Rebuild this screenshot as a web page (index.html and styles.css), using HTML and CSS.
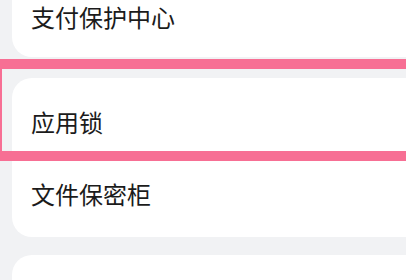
FILE: index.html
```html
<!DOCTYPE html>
<html lang="zh-CN">
<head>
    <meta charset="UTF-8">
    <meta name="viewport" content="width=device-width, initial-scale=1.0">
    <title>安全设置</title>
    <link rel="stylesheet" href="styles.css">
</head>
<body>
    <div class="list">
        <div class="card card-top">
            <div class="row">支付保护中心</div>
        </div>

        <div class="card card-group">
            <div class="highlight"></div>
            <div class="row">应用锁</div>
            <div class="row">文件保密柜</div>
        </div>

        <div class="card card-next">
            <div class="row"></div>
        </div>
    </div>
</body>
</html>
```

FILE: styles.css
```css
* {
    margin: 0;
    padding: 0;
    box-sizing: border-box;
}

body {
    font-family: "Noto Sans CJK SC", "Noto Sans", sans-serif;
    color: #1b1b1b;
    background-color: #f1f2f4;
    overflow: hidden;
    height: 280px;
}

.list {
    display: flex;
    flex-direction: column;
}

.card {
    position: relative;
    background: #ffffff;
    margin-left: 12px;
    margin-right: -24px;
    border-radius: 20px;
}

.row {
    height: 72px;
    display: flex;
    align-items: center;
    padding-left: 19px;
    font-size: 24px;
    line-height: 1;
}

.card-top {
    margin-top: -19px;
    padding-bottom: 4px;
}

.card-group {
    margin-top: 21px;
    padding: 8px 0 7px;
}

.card-next {
    margin-top: 18px;
}

/* pink frame drawn over the 应用锁 row */
.highlight {
    position: absolute;
    top: -19px;
    left: -20px;
    right: -10px;
    height: 102px;
    border: 10px solid #f76f94;
    pointer-events: none;
}
```
